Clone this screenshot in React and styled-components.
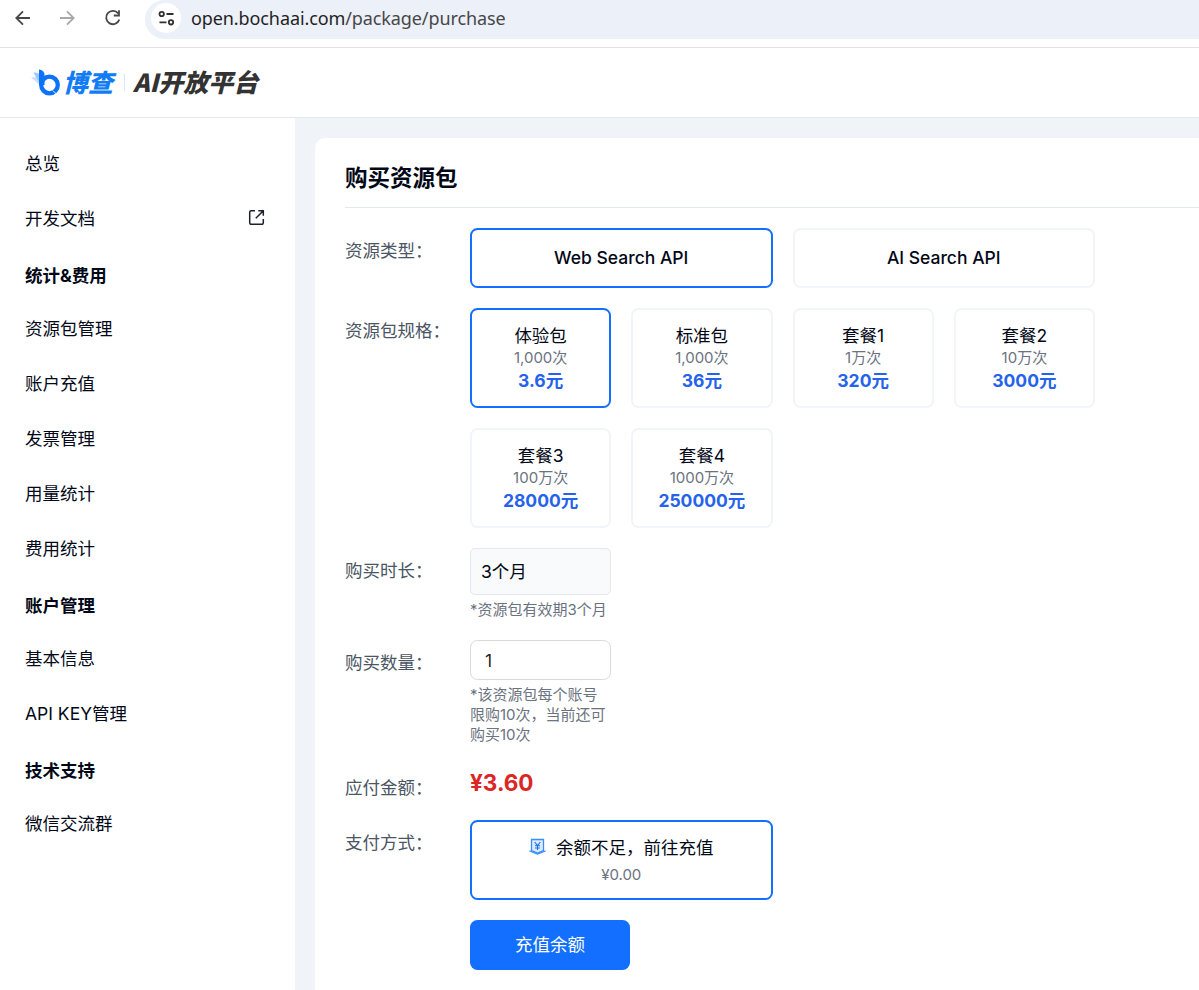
import React, { useState } from "react";
import styled, { createGlobalStyle } from "styled-components";

const GlobalStyle = createGlobalStyle`
  * {
    box-sizing: border-box;
  }

  body {
    margin: 0;
    overflow: hidden;
    background-color: white;
    color: #020817;
    font-family: Inter, "Noto Sans CJK SC", sans-serif;
    font-size: 17.5px;
    line-height: 25px;
  }
`;

const Page = styled.div`
  height: 100vh;
  display: flex;
  flex-direction: column;
`;

const BrowserBar = styled.div`
  height: 48px;
  flex-shrink: 0;
  display: flex;
  align-items: flex-start;
  border-bottom: 1px solid #e0e1e4;
`;

const BrowserNav = styled.div`
  width: 145px;
  height: 36px;
  display: flex;
  align-items: center;
  gap: 23px;
  padding-left: 12px;
`;

const AddressBar = styled.div`
  flex: 1;
  height: 39px;
  display: flex;
  align-items: center;
  gap: 10px;
  padding: 0 0 3px 6px;
  background-color: #ecf0f9;
  border-radius: 20px 0 0 20px;
`;

const SiteInfo = styled.div`
  width: 30px;
  height: 30px;
  display: flex;
  align-items: center;
  justify-content: center;
  border-radius: 50%;
  background-color: white;
`;

const Url = styled.div`
  font-family: "Noto Sans", sans-serif;
  font-size: 18px;
  letter-spacing: -0.1px;
  color: #1f1f1f;
  white-space: nowrap;

  span {
    color: #474747;
  }
`;

const Header = styled.header`
  height: 70px;
  flex-shrink: 0;
  display: flex;
  align-items: center;
  padding-left: 31px;
  border-bottom: 1px solid #e2e8f0;
`;

const Brand = styled.span`
  margin-left: 1px;
  padding-bottom: 2px;
  font-family: "Noto Sans CJK SC", sans-serif;
  font-size: 25px;
  font-style: italic;
  font-weight: 900;
  color: #127cf5;
`;

const Separator = styled.span`
  width: 1px;
  height: 17px;
  margin: 0 8px 0 11px;
  background-color: #d5e9fd;
`;

const Platform = styled(Brand)`
  margin-left: 0;
  color: #333;
`;

const Body = styled.div`
  flex: 1;
  min-height: 0;
  display: flex;
`;

const Sidebar = styled.nav`
  width: 295px;
  flex-shrink: 0;
  padding: 18px 30px 0 25px;
`;

const MenuItem = styled.div`
  height: 55px;
  display: flex;
  align-items: center;
  justify-content: space-between;

  svg {
    margin-bottom: 2px;
  }
`;

const MenuTitle = styled(MenuItem)`
  padding-top: 3px;
  font-weight: 700;
`;

const Main = styled.main`
  flex: 1;
  padding: 20px 0 0 20px;
  background-color: #f0f4f9;
`;

const Card = styled.section`
  height: 100%;
  padding: 20px 0 0 30px;
  background-color: white;
  border-top-left-radius: 10px;
`;

const Title = styled.h1`
  height: 50px;
  margin: 0 0 20px;
  padding-bottom: 10px;
  border-bottom: 1px solid #e2e8f0;
  font-size: 22.5px;
  font-weight: 700;
  line-height: 40px;
`;

const Form = styled.div`
  width: 750px;
  display: flex;
  flex-direction: column;
  gap: 20px;
`;

const Row = styled.div`
  display: grid;
  grid-template-columns: 125px 1fr;
`;

const Label = styled.div`
  padding-top: 10px;
  color: #4b5563;
`;

const Options = styled.div`
  display: grid;
  grid-template-columns: repeat(${(props) => props.$columns}, 1fr);
  gap: 20px;
`;

const Option = styled.div`
  padding: 13px;
  border: 2px solid ${(props) => (props.$active ? "#126fff" : "#f1f5f9")};
  border-radius: 7.5px;
  text-align: center;
  cursor: pointer;
`;

const TypeOption = styled(Option)`
  padding: 15px 15px 16px;
  font-weight: 500;
`;

const Name = styled.div`
  display: flex;
  justify-content: center;
  align-items: center;
  gap: 10px;

  svg {
    margin-bottom: 2px;
  }
`;

const Small = styled.div`
  font-size: 15px;
  line-height: 20px;
  color: #6b7280;
`;

const Price = styled.div`
  font-weight: 700;
  color: #2563eb;
`;

const Field = styled.div`
  width: 141px;
  display: flex;
  flex-direction: column;
  gap: 5px;
`;

const Duration = styled.div`
  height: 47px;
  padding: 10px;
  border: 1px solid #e2e8f0;
  border-radius: 5px;
  background-color: #f8fafc;
`;

const Quantity = styled.input`
  width: 100%;
  height: 40px;
  padding: 0 14px;
  border: 1px solid #d9d9d9;
  border-radius: 7.5px;
  outline: none;
  color: rgba(0, 0, 0, 0.88);
  font: inherit;
`;

const Amount = styled.div`
  height: 35px;
  font-size: 22.5px;
  font-weight: 700;
  line-height: 35px;
  color: #dc2626;
`;

const Balance = styled(Small)`
  margin-top: 5px;
`;

const PayButton = styled.button`
  width: 160px;
  height: 50px;
  margin-left: 125px;
  padding: 0 0 2px;
  border: none;
  border-radius: 7.5px;
  background-color: #126fff;
  color: white;
  font: inherit;
`;

const BackIcon = ({ color }) => (
  <svg width="22" height="22" viewBox="0 0 22 22" fill="none" stroke={color} strokeWidth="1.8">
    <path d="M18 11H4.5M11 4.3 4.3 11l6.7 6.7" />
  </svg>
);

const ForwardIcon = ({ color }) => (
  <svg width="22" height="22" viewBox="0 0 22 22" fill="none" stroke={color} strokeWidth="1.8">
    <path d="M3 11h13.5M10 4.3l6.7 6.7-6.7 6.7" />
  </svg>
);

const ReloadIcon = () => (
  <svg width="22" height="22" viewBox="0 0 22 22" fill="none" stroke="#474747" strokeWidth="1.8">
    <path d="M16.2 6.4A6.7 6.7 0 1 0 17.3 12.5M17 3.3v5.2h-5.2" />
  </svg>
);

const TuneIcon = () => (
  <svg width="18" height="18" viewBox="0 0 18 18" fill="none" stroke="#303030" strokeWidth="1.8">
    <circle cx="4.7" cy="5" r="2.2" />
    <path d="M9.5 5h7M2.5 13.300h7" />
    <circle cx="14" cy="13.3" r="2.2" />
  </svg>
);

const Logo = () => (
  <svg width="31" height="28" viewBox="0 0 31 28">
    <path d="M0 8.5 6 8l4 9Z" fill="#c9e1fb" />
    <path d="M2.5 3.5Q8 3 9.5 7v9Z" fill="#9bc9fb" />
    <path d="M8 .5c3 .5 5.5 2 5.5 5.5v10H8Z" fill="#0b73fa" />
    <circle cx="18.5" cy="16" r="8.3" fill="none" stroke="#0b73fa" strokeWidth="4.3" />
    <path d="m21.5 21.5 3.5 3" stroke="white" strokeWidth=".8" />
  </svg>
);

const LinkIcon = () => (
  <svg width="17" height="17" viewBox="0 0 17 17" fill="none" stroke="#1b2030" strokeWidth="1.5">
    <path d="M7 1.7H3.2A1.5 1.5 0 0 0 1.7 3.2v10.6a1.5 1.5 0 0 0 1.5 1.5h10.6a1.5 1.5 0 0 0 1.5-1.5V10M10.3 1.7h5v5M15.3 1.7 7.8 9.2" />
  </svg>
);

const WalletIcon = () => (
  <svg width="17" height="17" viewBox="0 0 17 17" fill="none" stroke="#3b8cff">
    <path d="M2.5 1.5h12v11l-6 2.5-6-2.5Z" fill="#dcebff" strokeWidth="1.3" />
    <path d="M1 12.5v.5l7.5 3 7.5-3v-.5" strokeWidth="1.3" />
    <path
      d="m5.700 4 2.800 3.500L11.300 4M8.500 7.500V12M6 7.800h5M6 10h5"
      stroke="#1a72f5"
      strokeWidth="1.1"
    />
  </svg>
);

const menu = [
  { name: "总览" },
  { name: "开发文档", external: true },
  { name: "统计&费用", title: true },
  { name: "资源包管理" },
  { name: "账户充值" },
  { name: "发票管理" },
  { name: "用量统计" },
  { name: "费用统计" },
  { name: "账户管理", title: true },
  { name: "基本信息" },
  { name: "API KEY管理" },
  { name: "技术支持", title: true },
  { name: "微信交流群" },
];

const types = ["Web Search API", "AI Search API"];

const packages = [
  { name: "体验包", count: "1,000次", price: "3.6元" },
  { name: "标准包", count: "1,000次", price: "36元" },
  { name: "套餐1", count: "1万次", price: "320元" },
  { name: "套餐2", count: "10万次", price: "3000元" },
  { name: "套餐3", count: "100万次", price: "28000元" },
  { name: "套餐4", count: "1000万次", price: "250000元" },
];

const App = () => {
  const [type, setType] = useState(0);
  const [selected, setSelected] = useState(0);
  const [quantity, setQuantity] = useState("1");

  return (
    <Page>
      <GlobalStyle />
      <BrowserBar>
        <BrowserNav>
          <BackIcon color="#474747" />
          <ForwardIcon color="#a8a8a8" />
          <ReloadIcon />
        </BrowserNav>
        <AddressBar>
          <SiteInfo>
            <TuneIcon />
          </SiteInfo>
          <Url>
            open.bochaai.com<span>/package/purchase</span>
          </Url>
        </AddressBar>
      </BrowserBar>
      <Header>
        <Logo />
        <Brand>博查</Brand>
        <Separator />
        <Platform>AI开放平台</Platform>
      </Header>
      <Body>
        <Sidebar>
          {menu.map((item) =>
            item.title ? (
              <MenuTitle key={item.name}>{item.name}</MenuTitle>
            ) : (
              <MenuItem key={item.name}>
                {item.name}
                {item.external && <LinkIcon />}
              </MenuItem>
            )
          )}
        </Sidebar>
        <Main>
          <Card>
            <Title>购买资源包</Title>
            <Form>
              <Row>
                <Label>资源类型：</Label>
                <Options $columns={2}>
                  {types.map((name, i) => (
                    <TypeOption key={name} $active={i === type} onClick={() => setType(i)}>
                      {name}
                    </TypeOption>
                  ))}
                </Options>
              </Row>
              <Row>
                <Label>资源包规格：</Label>
                <Options $columns={4}>
                  {packages.map((item, i) => (
                    <Option key={item.name} $active={i === selected} onClick={() => setSelected(i)}>
                      <Name>{item.name}</Name>
                      <Small>{item.count}</Small>
                      <Price>{item.price}</Price>
                    </Option>
                  ))}
                </Options>
              </Row>
              <Row>
                <Label>购买时长：</Label>
                <Field>
                  <Duration>3个月</Duration>
                  <Small>*资源包有效期3个月</Small>
                </Field>
              </Row>
              <Row>
                <Label>购买数量：</Label>
                <Field>
                  <Quantity value={quantity} onChange={(e) => setQuantity(e.target.value)} />
                  <Small>*该资源包每个账号限购10次，当前还可购买10次</Small>
                </Field>
              </Row>
              <Row>
                <Label>应付金额：</Label>
                <Amount>¥3.60</Amount>
              </Row>
              <Row>
                <Label>支付方式：</Label>
                <Options $columns={2}>
                  <Option $active>
                    <Name>
                      <WalletIcon />
                      余额不足，前往充值
                    </Name>
                    <Balance>¥0.00</Balance>
                  </Option>
                </Options>
              </Row>
              <PayButton>充值余额</PayButton>
            </Form>
          </Card>
        </Main>
      </Body>
    </Page>
  );
};

export default App;
